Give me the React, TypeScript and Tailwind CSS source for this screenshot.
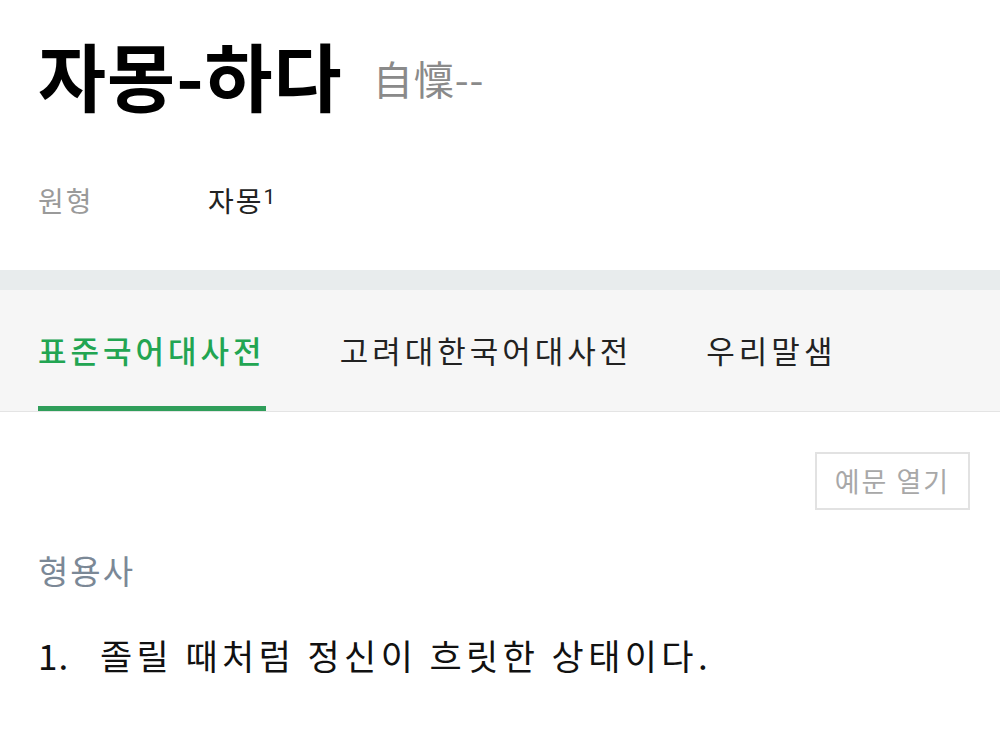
import React from "react";

const font = { fontFamily: '"Noto Sans CJK KR", "Noto Sans", sans-serif' };

export default function App() {
  return (
    <div className="w-[1000px] h-[750px] bg-white overflow-hidden text-[#111]" style={font}>
      {/* Headword */}
      <div className="px-[38px] pt-[24px]">
        <div className="flex items-center gap-[30px]">
          <h1 className="text-[74px] font-bold leading-[100px] tracking-[1px] text-black">자몽-하다</h1>
          <span className="text-[40px] leading-[50px] text-[#8a8a8a] mt-[8px] tracking-[1px]">自懍--</span>
        </div>
        <div className="flex items-center mt-[56px] text-[28px] leading-[40px] tracking-[2px]">
          <span className="w-[170px] text-[#9a9a9a]">원형</span>
          <span className="text-[#222]">
            자몽
            <sup
              className="text-[21px] relative -top-[8px]"
              style={{ fontFamily: 'Roboto, "Noto Sans", sans-serif' }}
            >
              1
            </sup>
          </span>
        </div>
      </div>

      {/* Divider band */}
      <div className="mt-[50px] h-[20px] bg-[#e8eced]" />

      {/* Tabs */}
      <div className="h-[122px] bg-[#f6f6f6] border-b border-[#e4e4e4] px-[38px] flex gap-[74px] text-[31px] tracking-[4px]">
        <div className="relative flex items-center text-[#22a552] font-medium">
          표준국어대사전
          <div className="absolute left-0 right-0 bottom-0 h-[5px] bg-[#2f9e5a]" />
        </div>
        <div className="flex items-center text-[#222]">고려대한국어대사전</div>
        <div className="flex items-center text-[#222]">우리말샘</div>
      </div>

      {/* Body */}
      <div className="px-[30px] pt-[40px]">
        <div className="flex justify-end">
          <button className="w-[155px] h-[58px] border-2 border-[#e2e2e2] text-[27px] tracking-[2px] text-[#a8a8a8]">
            예문 열기
          </button>
        </div>
        <div className="px-[8px]">
          <div className="mt-[36px] text-[33px] tracking-[2px] text-[#7b8896]">형용사</div>
          <div className="mt-[33px] flex text-[35px] text-[#111]">
            <span className="w-[62px] tracking-[1px]">1.</span>
            <span className="tracking-[4.4px]">졸릴 때처럼 정신이 흐릿한 상태이다.</span>
          </div>
        </div>
      </div>
    </div>
  );
}
